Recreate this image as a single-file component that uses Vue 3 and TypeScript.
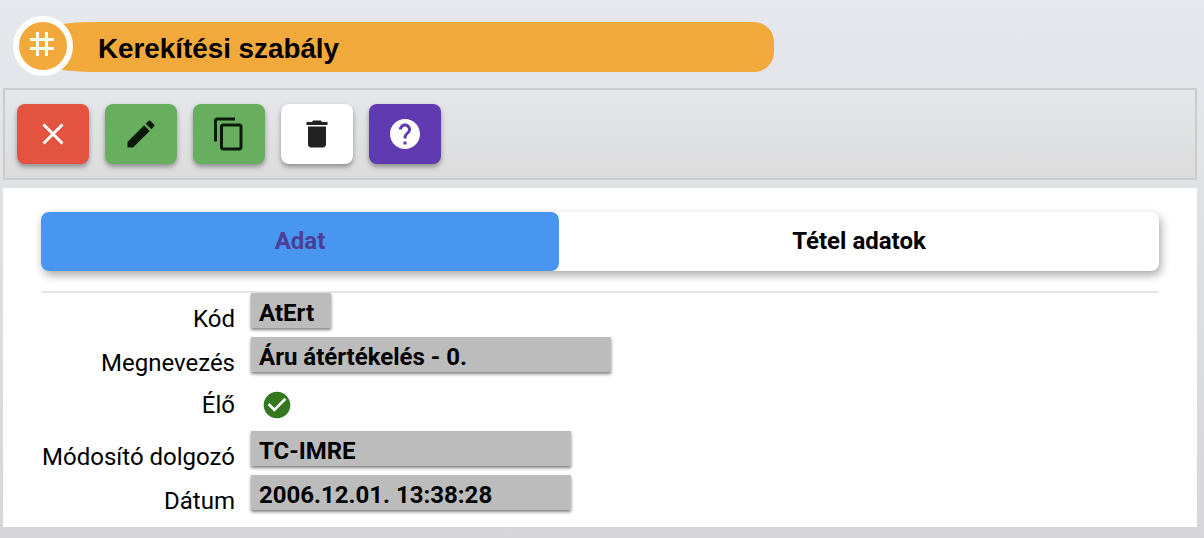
<script setup lang="ts">
interface Row { label: string; value?: string; width: number }
const rows: Row[] = [
  { label: 'Kód', value: 'AtErt', width: 80 },
  { label: 'Megnevezés', value: 'Áru átértékelés - 0.', width: 360 },
  { label: 'Élő', width: 0 },
  { label: 'Módosító dolgozó', value: 'TC-IMRE', width: 320 },
  { label: 'Dátum', value: '2006.12.01. 13:38:28', width: 320 },
]
</script>

<template>
  <div class="page">
    <header class="title">
      <div class="badge">
        <svg class="hash" width="24" height="24" viewBox="0 0 24 24" fill="none" stroke="#fff" stroke-width="3">
          <path d="M7.500 0v24M16.500 0v24M0 7.500h24M0 16.500h24" />
        </svg>
      </div>
      <div class="pill">Kerekítési szabály</div>
    </header>

    <div class="toolbar">
      <button class="btn red">
        <svg width="24" height="24" viewBox="0 0 24 24" fill="none" stroke="#fff" stroke-width="3"><path d="M2.500 2.500l19 19M21.500 2.500l-19 19" /></svg>
      </button>
      <button class="btn green">
        <svg width="36" height="36" viewBox="0 0 24 24" fill="#0c1a0c"><path d="M3 17.250V21h3.750L17.810 9.940l-3.750-3.750L3 17.250zM20.710 7.040a1 1 0 0 0 0-1.410l-2.340-2.340a1 1 0 0 0-1.410 0l-1.830 1.830 3.750 3.750 1.830-1.830z" /></svg>
      </button>
      <button class="btn green">
        <svg width="36" height="36" viewBox="0 0 24 24" fill="#0c1a0c"><path d="M16 1H4c-1.100 0-2 .9-2 2v14h2V3h12V1zm3 4H8c-1.100 0-2 .9-2 2v14c0 1.100.9 2 2 2h11c1.100 0 2-.9 2-2V7c0-1.100-.9-2-2-2zm0 16H8V7h11v14z" /></svg>
      </button>
      <button class="btn white">
        <svg width="36" height="36" viewBox="0 0 24 24" fill="#212121"><path d="M6 19c0 1.100.9 2 2 2h8c1.100 0 2-.9 2-2V7H6v12zM19 4h-3.500l-1-1h-5l-1 1H5v2h14V4z" /></svg>
      </button>
      <button class="btn purple">
        <svg width="36" height="36" viewBox="0 0 24 24" fill="#fff"><path d="M12 2C6.480 2 2 6.480 2 12s4.480 10 10 10 10-4.480 10-10S17.520 2 12 2zm1 17h-2v-2h2v2zm2.070-7.750-.9.920C13.450 12.900 13 13.500 13 15h-2v-.5c0-1.100.45-2.100 1.170-2.830l1.240-1.260c.37-.36.590-.86.590-1.410 0-1.100-.9-2-2-2s-2 .9-2 2H8c0-2.210 1.790-4 4-4s4 1.790 4 4c0 .88-.36 1.680-.93 2.250z" /></svg>
      </button>
    </div>

    <main class="card">
      <div class="tabs">
        <div class="tab active">Adat</div>
        <div class="tab second">Tétel adatok</div>
      </div>
      <hr class="divider" />
      <div class="form">
        <div v-for="row in rows" :key="row.label" class="row" :class="{ check: !row.value }">
          <div class="label">{{ row.label }}</div>
          <div v-if="row.value" class="field" :style="{ width: row.width + 'px' }">{{ row.value }}</div>
          <svg v-else class="ok" width="32" height="32" viewBox="0 0 24 24" fill="#33771f">
            <path d="M12 2C6.480 2 2 6.480 2 12s4.480 10 10 10 10-4.480 10-10S17.520 2 12 2zm-2 15-5-5 1.410-1.410L10 14.170l7.590-7.590L19 8l-9 9z" />
          </svg>
        </div>
      </div>
    </main>
  </div>
</template>

<style>
html, body { margin: 0; }
</style>

<style scoped>
.page {
  width: 1204px;
  height: 538px;
  box-sizing: border-box;
  overflow: hidden;
  padding: 16px 7px 0 3px;
  background: linear-gradient(180deg, #e6e8ed 0%, #d6d6d8 100%);
  font-family: Roboto, sans-serif;
  color: #000;
}
.title {
  display: flex;
  align-items: center;
  height: 60px;
  margin-left: 10px;
}
.badge {
  position: relative;
  z-index: 1;
  flex: none;
  width: 60px;
  height: 60px;
  box-sizing: border-box;
  border: 6px solid #fff;
  border-radius: 50%;
  background: #f2a93b;
  display: flex;
  align-items: center;
  justify-content: center;
}
.hash {
  margin: -4px 2px 0 0;
}
.pill {
  width: 716px;
  height: 50px;
  margin: 2px 0 0 -15px;
  padding-left: 40px;
  box-sizing: border-box;
  background: #f2a93b;
  border-radius: 40px 20px 20px 40px / 4px 20px 20px 4px;
  font: 700 27.800px/54px "Liberation Sans", Arial, sans-serif;
}
.toolbar {
  display: flex;
  gap: 16px;
  height: 92px;
  margin-top: 12px;
  box-sizing: border-box;
  padding: 14px 12px;
  border: 2px solid #cbcbcb;
  background: linear-gradient(180deg, #e4e6ea 0%, #dcdcdc 100%);
}
.btn {
  width: 72px;
  height: 60px;
  padding: 0;
  border: 0;
  border-radius: 8px;
  display: flex;
  align-items: center;
  justify-content: center;
  box-shadow: 0 3px 5px rgba(0, 0, 0, 0.35);
}
.red { background: #e35340; }
.green { background: #67ae5e; }
.white { background: #fff; }
.purple { background: #5f3ab0; }
.card {
  margin-top: 8px;
  height: 339px;
  box-sizing: border-box;
  background: #fff;
  padding: 24px 38px 0;
}
.tabs {
  display: flex;
  height: 59px;
  border-radius: 8px;
  background: #fff;
  box-shadow: 2px 4px 10px rgba(0, 0, 0, 0.35);
}
.tab {
  text-align: center;
  font-weight: 700;
  font-size: 24px;
  line-height: 59px;
  border-radius: 8px;
}
.active {
  width: 518px;
  background: #4896f0;
  color: #4b3f9a;
}
.second {
  flex: 1;
}
.divider {
  height: 2px;
  margin: 20px 0 0;
  border: 0;
  background: #e6e6e6;
}
.form {
  display: flex;
  flex-direction: column;
  gap: 8px;
}
.row {
  display: flex;
  gap: 16px;
  height: 36px;
}
.check {
  height: 38px;
  margin-top: 4px;
  align-items: flex-start;
}
.label {
  width: 194px;
  text-align: right;
  font-size: 24px;
  line-height: 28px;
  padding-top: 12px;
  white-space: nowrap;
}
.check .label {
  padding-top: 6px;
}
.field {
  height: 35px;
  box-sizing: border-box;
  padding: 0 8px;
  background: #bcbcbc;
  font-weight: 700;
  font-size: 24px;
  line-height: 40px;
  box-shadow: 0 2px 3px rgba(0, 0, 0, 0.5);
  white-space: nowrap;
}
.ok {
  margin: 4px 0 0 10px;
}
</style>
